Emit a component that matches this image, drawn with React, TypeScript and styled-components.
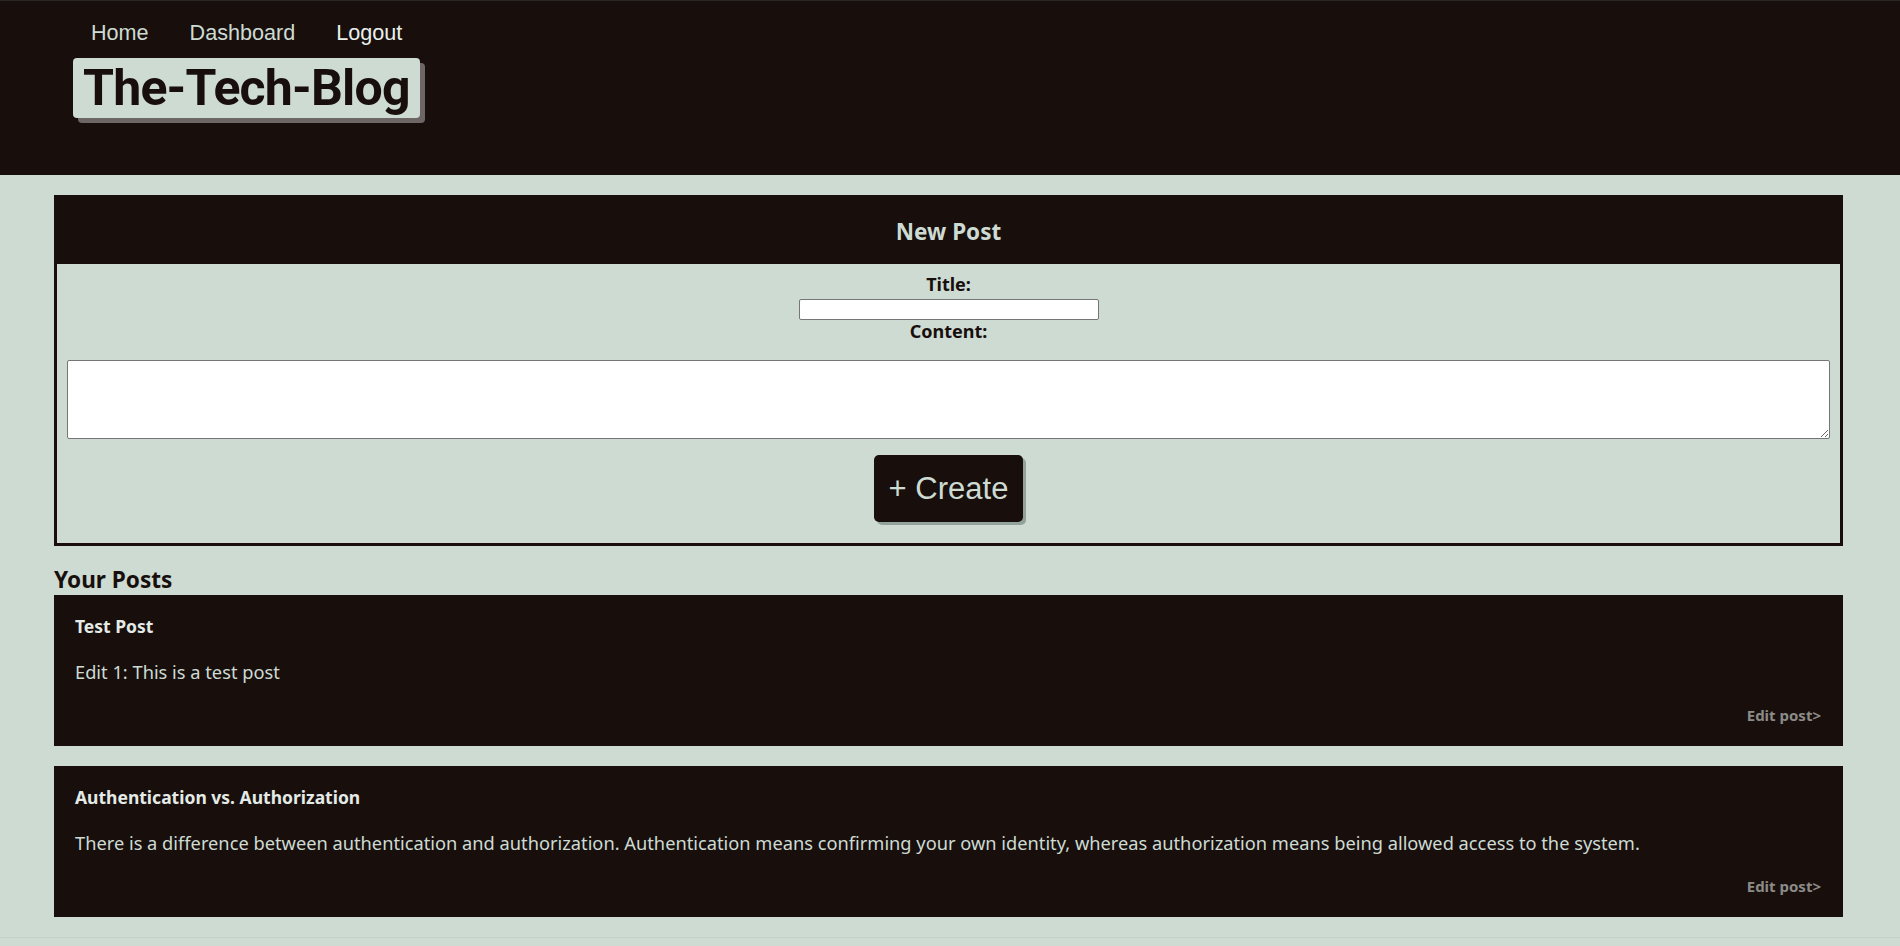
import React from "react";
import styled, { createGlobalStyle } from "styled-components";

const DARK = "#180f0d";
const LIGHT = "#cddbd3";
const PLEX = `"Noto Sans", Roboto, sans-serif`;

const Global = createGlobalStyle`
  html, body { margin: 0; padding: 0; }
  body {
    background: ${LIGHT};
    font-family: ${PLEX};
    color: ${DARK};
  }
`;

const Header = styled.header`
  background: ${DARK};
  height: 175px;
  box-sizing: border-box;
  border-top: 1px solid #2a2626;
  padding: 20px 0 0 73px;
  display: flex;
  flex-direction: column;
  align-items: flex-start;
`;

const Nav = styled.nav`
  display: flex;
  gap: 41px;
  padding-left: 18px;
`;

const NavLink = styled.a<{ $active?: boolean }>`
  font-family: "Liberation Sans", Arial, sans-serif;
  font-size: 21.6px;
  line-height: 24px;
  color: ${(p) => (p.$active ? "#e9efeb" : LIGHT)};
  text-decoration: none;
`;

const Logo = styled.h1`
  margin: 13px 0 0 0;
  background: ${LIGHT};
  color: ${DARK};
  font-family: Roboto, sans-serif;
  font-weight: 700;
  font-size: 50px;
  line-height: 60px;
  height: 60px;
  padding: 0 10px 0 10px;
  border-radius: 4px;
  box-shadow: 5px 5px 0 #6e6666;
  letter-spacing: -0.8px;
`;

const Main = styled.main`
  padding: 20px 57px 0 54px;
`;

const FormCard = styled.section`
  border: 3px solid ${DARK};
  background: ${LIGHT};
`;

const FormHead = styled.h2`
  margin: 0;
  background: ${DARK};
  color: ${LIGHT};
  height: 66px;
  display: flex;
  align-items: center;
  justify-content: center;
  font-size: 22.5px;
  font-weight: 700;
`;

const FormBody = styled.form`
  display: flex;
  flex-direction: column;
  align-items: center;
  padding: 10px 10px 21px;
`;

const Label = styled.label`
  font-weight: 700;
  font-size: 18px;
  line-height: 20px;
  color: ${DARK};
`;

const TitleInput = styled.input`
  box-sizing: border-box;
  width: 300px;
  height: 21px;
  margin: 5px 0 1px;
  border: 1px solid #767676;
  border-radius: 2px;
  background: #fff;
`;

const ContentArea = styled.textarea`
  box-sizing: border-box;
  width: 100%;
  height: 79px;
  margin-top: 19px;
  border: 1px solid #767676;
  border-radius: 2px;
  background: #fff;
`;

const CreateButton = styled.button`
  margin-top: 16px;
  height: 67px;
  padding: 0 15px;
  background: ${DARK};
  color: ${LIGHT};
  border: none;
  border-radius: 5px;
  box-shadow: 3px 3px 0 #92a39c;
  font-family: "Liberation Sans", Arial, sans-serif;
  font-size: 31px;
  cursor: pointer;
`;

const SectionTitle = styled.h2`
  margin: 22px 0 3px;
  font-size: 22.6px;
  line-height: 24px;
  font-weight: 700;
  color: ${DARK};
`;

const PostCard = styled.article`
  background: ${DARK};
  padding: 20px 22px 22px 21px;
  margin-bottom: 20px;
  display: flex;
  flex-direction: column;
`;

const PostTitle = styled.h3`
  margin: 0;
  font-size: 17.5px;
  line-height: 22px;
  font-weight: 700;
  color: #e4eae6;
`;

const PostBody = styled.p`
  margin: 24px 0 0;
  font-size: 18.25px;
  line-height: 22px;
  color: ${LIGHT};
`;

const EditLink = styled.a`
  align-self: flex-end;
  margin-top: 23px;
  font-size: 15px;
  line-height: 18px;
  font-weight: 700;
  color: #8b8b87;
  text-decoration: none;
`;

const Footer = styled.footer`
  border-top: 1px solid #c3d1c9;
  height: 8px;
`;

const posts = [
  { title: "Test Post", body: "Edit 1: This is a test post" },
  {
    title: "Authentication vs. Authorization",
    body: "There is a difference between authentication and authorization. Authentication means confirming your own identity, whereas authorization means being allowed access to the system.",
  },
];

export default function App() {
  return (
    <>
      <Global />
      <Header>
        <Nav>
          <NavLink href="#">Home</NavLink>
          <NavLink href="#">Dashboard</NavLink>
          <NavLink href="#" $active>Logout</NavLink>
        </Nav>
        <Logo>The-Tech-Blog</Logo>
      </Header>
      <Main>
        <FormCard>
          <FormHead>New Post</FormHead>
          <FormBody onSubmit={(e) => e.preventDefault()}>
            <Label htmlFor="title">Title:</Label>
            <TitleInput id="title" type="text" />
            <Label htmlFor="content">Content:</Label>
            <ContentArea id="content" />
            <CreateButton type="submit">+ Create</CreateButton>
          </FormBody>
        </FormCard>
        <SectionTitle>Your Posts</SectionTitle>
        {posts.map((p) => (
          <PostCard key={p.title}>
            <PostTitle>{p.title}</PostTitle>
            <PostBody>{p.body}</PostBody>
            <EditLink href="#">Edit post&gt;</EditLink>
          </PostCard>
        ))}
      </Main>
      <Footer />
    </>
  );
}
